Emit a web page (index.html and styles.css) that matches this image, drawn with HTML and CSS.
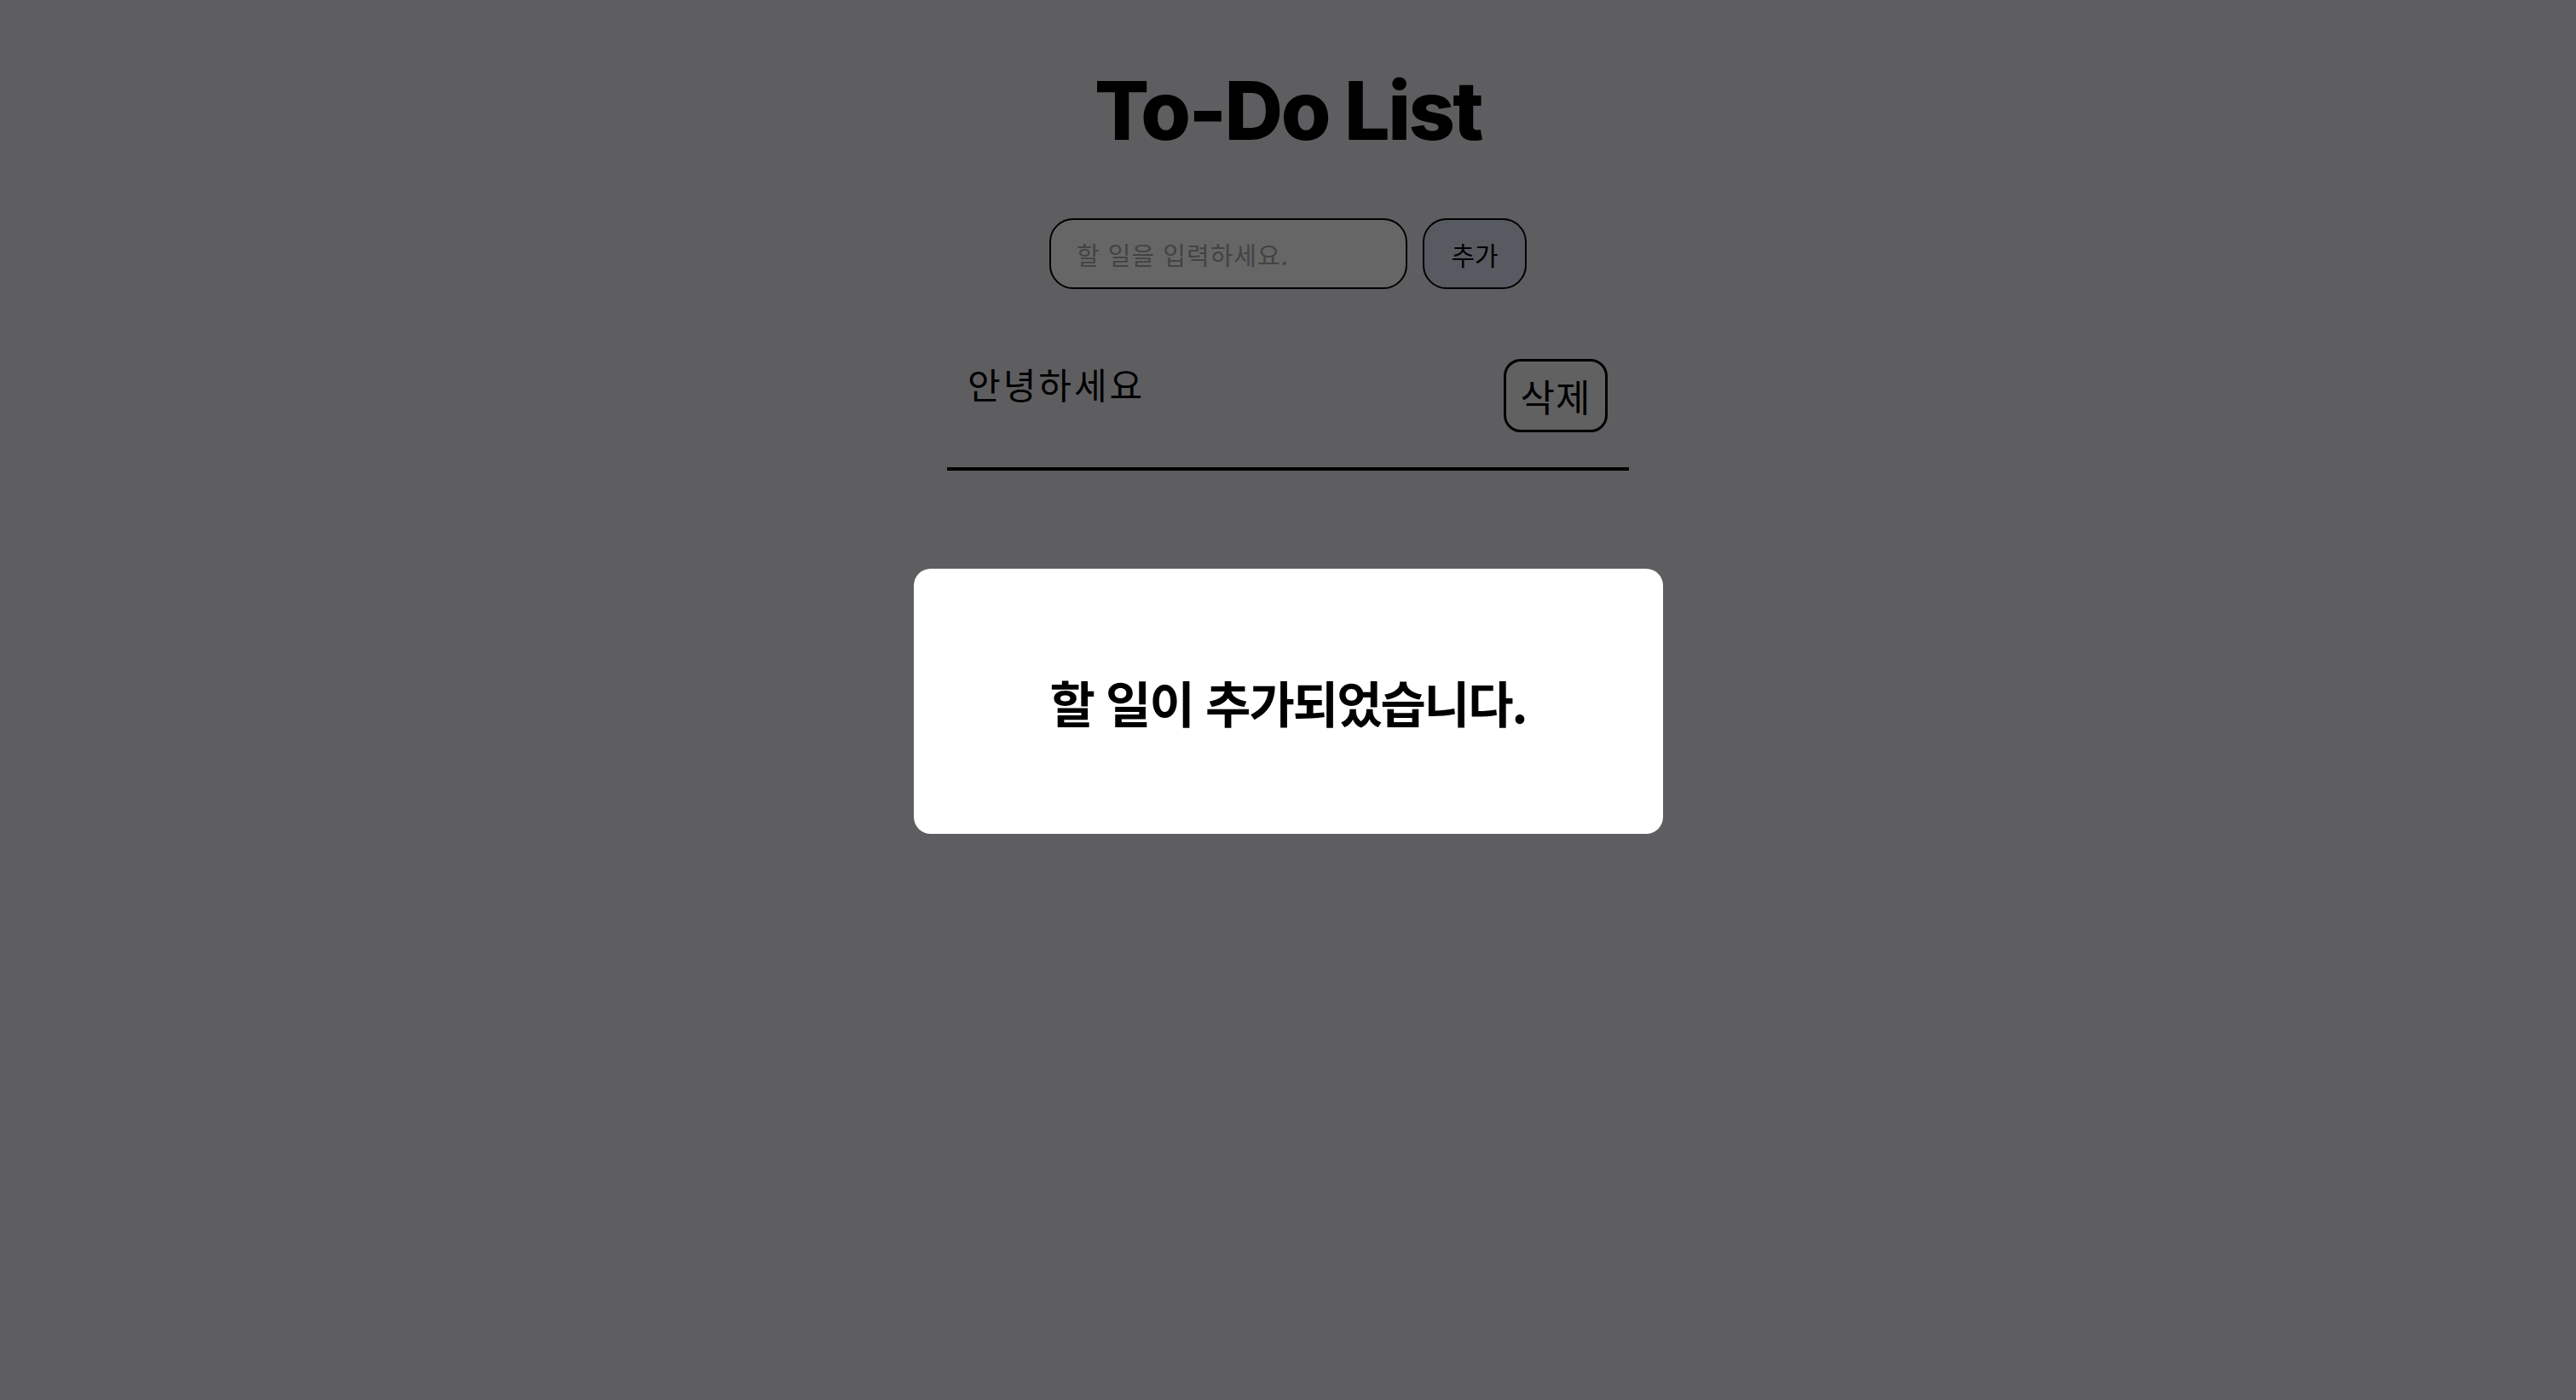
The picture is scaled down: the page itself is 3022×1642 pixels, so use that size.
FILE: index.html
```html
<!DOCTYPE html>
<html lang="ko">
<head>
<meta charset="utf-8">
<title>To-Do List</title>
<link rel="stylesheet" href="styles.css">
</head>
<body>
<main class="app">
  <h1 class="title">To-Do List</h1>
  <form class="todo-form">
    <input class="todo-input" type="text" placeholder="할 일을 입력하세요.">
    <button class="add-btn" type="button">추가</button>
  </form>
  <ul class="todo-list">
    <li class="todo-item">
      <span class="todo-text">안녕하세요</span>
      <button class="delete-btn" type="button">삭제</button>
    </li>
  </ul>
</main>
<div class="overlay">
  <div class="modal">
    <p class="modal-text">할 일이 추가되었습니다.</p>
  </div>
</div>
</body>
</html>
```
FILE: styles.css
```css
html, body {
  margin: 0;
  padding: 0;
}

body {
  background: #ececef;
  font-family: "Inter", "Noto Sans CJK KR", sans-serif;
  color: #000;
  min-height: 100vh;
}

.app {
  width: 800px;
  margin: 0 auto;
  display: flex;
  flex-direction: column;
  align-items: stretch;
}

.title {
  margin: 72px 0 0;
  font-size: 95px;
  line-height: 115px;
  font-weight: 800;
  letter-spacing: -2.6px;
  text-align: center;
}

.todo-form {
  margin-top: 69px;
  display: flex;
  justify-content: center;
  gap: 18px;
}

.todo-input {
  box-sizing: border-box;
  width: 420px;
  height: 83px;
  padding: 0 30px;
  border: 2px solid #000;
  border-radius: 28px;
  background: #ffffff;
  font-family: "Noto Sans CJK KR", sans-serif;
  font-size: 29px;
  letter-spacing: 1px;
  color: #000;
  outline: none;
}

.todo-input::placeholder {
  color: #a8a8a8;
}

.add-btn {
  box-sizing: border-box;
  width: 122px;
  height: 83px;
  padding: 0;
  border: 2px solid #000;
  border-radius: 28px;
  background: #d9e1f0;
  font-family: "Noto Sans CJK KR", sans-serif;
  font-size: 30px;
  color: #000;
}

.todo-list {
  list-style: none;
  margin: 61px 0 0;
  padding: 0;
}

.todo-item {
  display: flex;
  justify-content: space-between;
  align-items: flex-start;
  padding: 20px 25px 41px 24px;
  border-bottom: 4px solid #000;
}

.todo-text {
  font-family: "Noto Sans CJK KR", sans-serif;
  font-size: 42px;
  line-height: 61px;
  letter-spacing: 3px;
  margin-top: -1px;
}

.delete-btn {
  box-sizing: border-box;
  width: 122px;
  height: 86px;
  padding: 0;
  border: 3px solid #000;
  border-radius: 20px;
  background: #f2f2f2;
  font-family: "Noto Sans CJK KR", sans-serif;
  font-size: 44px;
  line-height: 58px;
  letter-spacing: 1px;
  color: #000;
  margin-top: 1px;
}

.overlay {
  position: fixed;
  inset: 0;
  background: rgba(0, 0, 0, 0.6);
  display: flex;
  justify-content: center;
  align-items: flex-start;
  padding-top: 667px;
  box-sizing: border-box;
}

.modal {
  width: 879px;
  height: 311px;
  background: #fff;
  border-radius: 20px;
  display: flex;
  align-items: center;
  justify-content: center;
}

.modal-text {
  margin: 0;
  font-family: "Noto Sans CJK KR", sans-serif;
  font-size: 58px;
  font-weight: 700;
  letter-spacing: -2px;
  color: #000;
}
```
